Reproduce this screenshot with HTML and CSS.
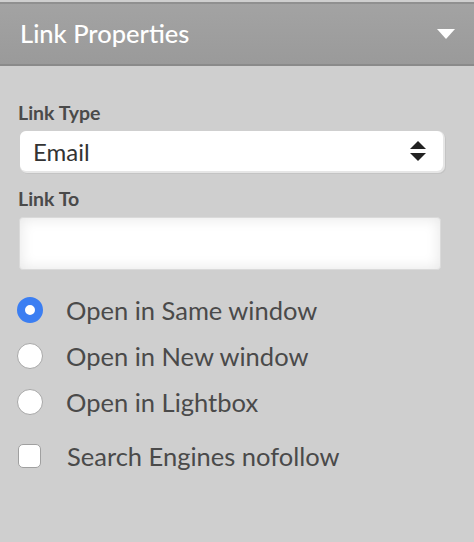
FILE: index.html
```html
<!DOCTYPE html>
<html>
<head>
<meta charset="utf-8">
<link rel="stylesheet" href="styles.css">
</head>
<body>
<div class="panel">
  <div class="header">
    <span class="title">Link Properties</span>
    <svg class="caret" width="18" height="10" viewBox="0 0 18 10"><polygon points="0,0 18,0 9,10" fill="#fff"/></svg>
  </div>
  <div class="content">
    <div class="label">Link Type</div>
    <div class="select">
      <span>Email</span>
      <svg class="updown" width="16" height="20" viewBox="0 0 16 20"><polygon points="8,0 16,8 0,8" fill="#222"/><polygon points="0,12 16,12 8,20" fill="#222"/></svg>
    </div>
    <div class="label label2">Link To</div>
    <div class="input"></div>
    <div class="options">
      <div class="opt"><span class="radio on"></span><span>Open in Same window</span></div>
      <div class="opt"><span class="radio"></span><span>Open in New window</span></div>
      <div class="opt"><span class="radio"></span><span>Open in Lightbox</span></div>
      <div class="opt check"><span class="box"></span><span>Search Engines nofollow</span></div>
    </div>
  </div>
</div>
</body>
</html>
```

FILE: styles.css
```css
html, body {
  margin: 0;
  padding: 0;
  background: #cfcfcf;
  font-family: Lato, "Open Sans", sans-serif;
}
.panel {
  width: 474px;
  height: 542px;
  background: #cfcfcf;
  padding-top: 2px;
}
.header {
  height: 60px;
  border-top: 2px solid #909090;
  border-bottom: 2px solid #8a8a8a;
  background: linear-gradient(#a3a3a3, #9a9a9a);
  display: flex;
  align-items: center;
  justify-content: space-between;
  padding: 0 19px 0 20px;
}
.title {
  color: #fff;
  font-size: 25.5px;
  font-weight: 500;
  margin-top: -2px;
}
.content {
  padding: 35px 0 0 18px;
}
.label {
  font-size: 19.5px;
  font-weight: 700;
  color: #4a4a4a;
  line-height: 24px;
}
.label2 {
  margin-top: 16px;
}
.select {
  margin: 6px 0 0 2px;
  width: 423px;
  height: 40px;
  box-sizing: border-box;
  background: #fff;
  border-radius: 6px;
  box-shadow: 1px 1px 0 1px #e6e6e6, 2px 2px 0 1px #c4c4c4;
  display: flex;
  align-items: center;
  justify-content: space-between;
  padding: 0 17px 0 13px;
  font-size: 24px;
  color: #333;
}
.input {
  margin: 6px 0 0 1px;
  width: 422px;
  height: 53px;
  box-sizing: border-box;
  background: #fff;
  border-radius: 4px;
  border: 1px solid #dadada;
  box-shadow: inset 0 0 14px 1px #e8e8e8;
}
.options {
  margin-top: 17px;
}
.opt {
  display: flex;
  align-items: center;
  height: 46px;
  font-size: 25.5px;
  color: #4a4a4a;
}
.radio {
  width: 26px;
  height: 26px;
  box-sizing: border-box;
  border-radius: 50%;
  border: 1px solid #a8a8a8;
  background: #fff;
  margin: 0 23px 0 -1px;
  flex: none;
}
.radio.on {
  border: 8px solid #3b7ef2;
  background: #fff;
}
.check {
  margin-top: 8px;
}
.box {
  width: 23px;
  height: 24px;
  box-sizing: border-box;
  border-radius: 5px;
  border: 1px solid #a0a0a0;
  background: #fff;
  margin: 0 26px 0 0;
  flex: none;
}
```
